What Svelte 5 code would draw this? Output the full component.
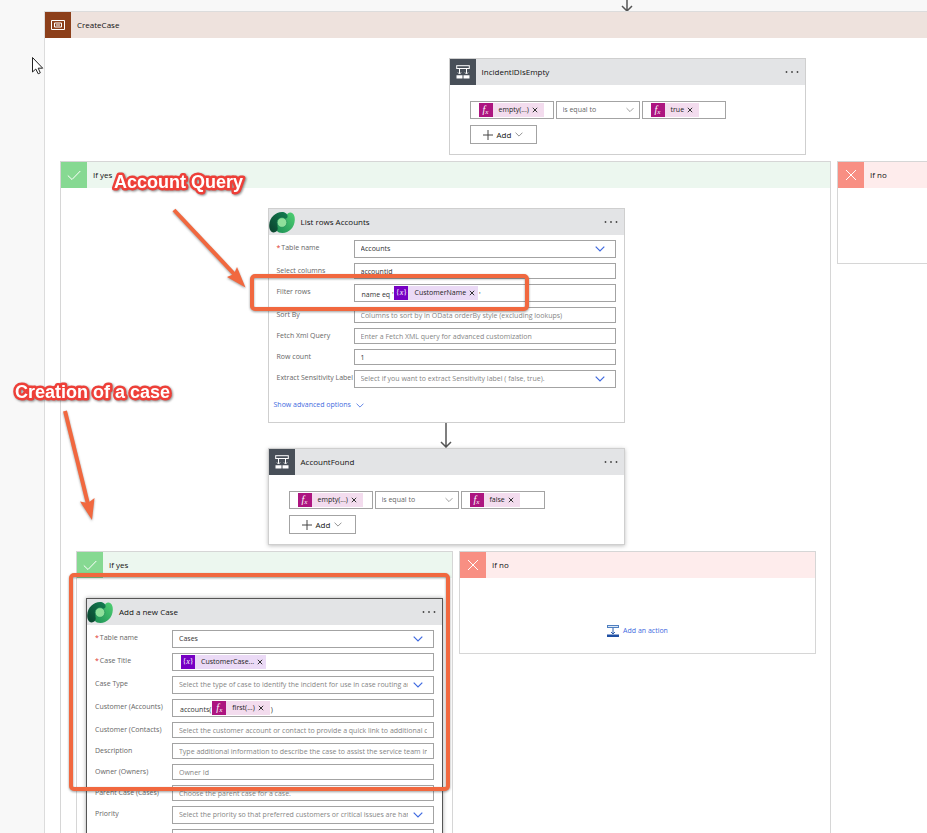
<script>
  const accountFields = [
    { id: 'acc-table', label: 'Table name', kind: 'select', value: 'Accounts', required: true },
    { id: 'acc-cols', label: 'Select columns', kind: 'text', value: 'accountid' },
    { id: 'acc-filter', label: 'Filter rows', kind: 'rich', before: "name eq '", token: { type: 'var', text: 'CustomerName' }, after: "'" },
    { id: 'acc-sort', label: 'Sort By', kind: 'text', hint: 'Columns to sort by in OData orderBy style (excluding lookups)' },
    { id: 'acc-fetch', label: 'Fetch Xml Query', kind: 'text', hint: 'Enter a Fetch XML query for advanced customization' },
    { id: 'acc-count', label: 'Row count', kind: 'text', value: '1' },
    { id: 'acc-label', label: 'Extract Sensitivity Label', kind: 'select', hint: 'Select if you want to extract Sensitivity label ( false, true).' }
  ];

  const caseFields = [
    { id: 'case-table', label: 'Table name', kind: 'select', value: 'Cases', required: true },
    { id: 'case-title', label: 'Case Title', kind: 'rich', token: { type: 'var', text: 'CustomerCase...' }, required: true },
    { id: 'case-type', label: 'Case Type', kind: 'select', hint: 'Select the type of case to identify the incident for use in case routing and analysis.' },
    { id: 'case-account', label: 'Customer (Accounts)', kind: 'rich', before: 'accounts(', token: { type: 'fx', text: 'first(...)' }, after: ')' },
    { id: 'case-contact', label: 'Customer (Contacts)', kind: 'text', hint: 'Select the customer account or contact to provide a quick link to additional customer details' },
    { id: 'case-desc', label: 'Description', kind: 'text', hint: 'Type additional information to describe the case to assist the service team in resolving it' },
    { id: 'case-owner', label: 'Owner (Owners)', kind: 'text', hint: 'Owner Id' },
    { id: 'case-parent', label: 'Parent Case (Cases)', kind: 'text', hint: 'Choose the parent case for a case.' },
    { id: 'case-priority', label: 'Priority', kind: 'select', hint: 'Select the priority so that preferred customers or critical issues are handled quickly.' },
    { id: 'case-next', label: '', kind: 'text' }
  ];
</script>

{#snippet chevron(cls)}
  <svg class={cls} viewBox="0 0 10 6" aria-hidden="true"><path d="M0.7 0.7 L5 5 L9.3 0.7" /></svg>
{/snippet}

{#snippet token(t)}
  <span class="token {t.type}">
    <span class="token-icon">
      {#if t.type === 'fx'}
        <i>f</i><i class="sub">x</i>
      {:else}
        {'{'}<i>x</i>{'}'}
      {/if}
    </span>
    <span class="token-text">{t.text}</span>
    <button class="token-close" aria-label="Remove {t.text}">
      <svg viewBox="0 0 6 6"><path d="M0.8 0.8 L5.2 5.2 M5.2 0.8 L0.8 5.2" /></svg>
    </button>
  </span>
{/snippet}

{#snippet field(f)}
  <div class="field">
    <label for={f.id} id="{f.id}-label">{#if f.required}<span class="req">*</span>{/if}{f.label}</label>
    {#if f.kind === 'select'}
      <span class="select-wrap">
        <select id={f.id} class="box" class:hint={!f.value}><option>{f.value ?? f.hint}</option></select>
        {@render chevron('chev blue')}
      </span>
    {:else if f.kind === 'rich'}
      <div id={f.id} class="box rich" role="textbox" tabindex="0" aria-labelledby="{f.id}-label">
        {#if f.before}<span class="piece">{f.before}</span>{/if}
        {@render token(f.token)}
        {#if f.after}<span class="piece">{f.after}</span>{/if}
      </div>
    {:else}
      <input id={f.id} class="box" type="text" value={f.value ?? ''} placeholder={f.hint ?? ''} />
    {/if}
  </div>
{/snippet}

{#snippet menu()}
  <button class="menu" aria-label="More commands">
    <svg viewBox="0 0 14 2"><circle cx="1.5" cy="1" r="0.9" /><circle cx="7" cy="1" r="0.9" /><circle cx="12.5" cy="1" r="0.9" /></svg>
  </button>
{/snippet}

{#snippet dataverse()}
  <svg class="dataverse" viewBox="0 0 26 21" aria-hidden="true">
    <defs>
      <linearGradient id="dv-dark" x1="0" y1="1" x2="1" y2="0"><stop offset="0" stop-color="#0a3f2c" /><stop offset="1" stop-color="#128052" /></linearGradient>
      <linearGradient id="dv-light" x1="0" y1="1" x2="1" y2="0"><stop offset="0" stop-color="#1c8f55" /><stop offset="1" stop-color="#4fd073" /></linearGradient>
    </defs>
    <path fill="url(#dv-light)" d="M21.500 0.600 C24.500 1 26 4 25.800 8 C25.500 15.500 20 21 13.500 21 C11 21 8.500 20.200 7.500 18.500 L8 13 L13 10.500 L17 4.500 C18 2 19.500 0.500 21.500 0.600 Z" />
    <path fill="url(#dv-dark)" d="M13 0 C16 0 18.500 1.800 18.600 4 C18.600 5.800 17.800 6.500 17 6.300 L13 10.500 L8.500 13 C8.300 14.500 8.600 15.200 8.800 16 C8.800 18.800 7 20.500 4.500 20.400 C1.500 20 0 17 0.200 13 C0.600 5.500 6.500 0 13 0 Z" />
    <circle cx="13" cy="10.500" r="4.800" fill="#8fe09b" stroke="#1a8a56" stroke-width="0.600" />
  </svg>
{/snippet}

{#snippet condition(title, left, right, raised)}
  <section class="card" class:raised>
    <header class="head">
      <span class="tile slate">
        <svg viewBox="0 0 14 14" aria-hidden="true">
          <rect x="0.700" y="0.700" width="12.600" height="2.800" />
          <path d="M3.500 3.500 V8.500 M10.500 3.500 V8.500 M2 7.500 L3.500 9 L5 7.500 M9 7.500 L10.500 9 L12 7.500" />
          <path class="solid" d="M0.500 10.200 H6.500 V13.500 H0.500 Z M7.500 10.200 H13.500 V13.500 H7.500 Z" />
        </svg>
      </span>
      <h2>{title}</h2>
      {@render menu()}
    </header>
    <div class="cond-body">
      <div class="cond-row">
        <div class="box rich" role="textbox" tabindex="0" aria-label="Left value">{@render token({ type: 'fx', text: left })}</div>
        <span class="select-wrap">
          <select class="box operator" aria-label="Operator"><option>is equal to</option></select>
          {@render chevron('chev grey')}
        </span>
        <div class="box rich" role="textbox" tabindex="0" aria-label="Right value">{@render token({ type: 'fx', text: right })}</div>
      </div>
      <button class="add">
        <svg class="plus" viewBox="0 0 10 10" aria-hidden="true"><path d="M5 0 V10 M0 5 H10" /></svg>
        Add
        {@render chevron('small')}
      </button>
    </div>
  </section>
{/snippet}

{#snippet yesHead()}
  <header class="head green-head">
    <span class="tile green"><svg viewBox="0 0 14 14" aria-hidden="true"><path d="M0.800 7.500 L5 11.500 L13.300 3" /></svg></span>
    <h2>If yes</h2>
  </header>
{/snippet}

{#snippet noHead()}
  <header class="head red-head">
    <span class="tile red"><svg viewBox="0 0 14 14" aria-hidden="true"><path d="M2 2 L12 12 M12 2 L2 12" /></svg></span>
    <h2>If no</h2>
  </header>
{/snippet}

<main class="canvas">
  <div class="flow">
    <svg class="connector short" viewBox="0 0 12 12" aria-hidden="true"><path d="M6 0 V11 M1 6 L6 11 L11 6" /></svg>

    <section class="scope">
      <header class="head scope-head">
        <span class="tile brown">
          <svg viewBox="0 0 14 14" aria-hidden="true"><path d="M0.500 2.500 H13.500 V11.500 H0.500 Z M3.500 5 H10.500 V9 H3.500 Z" /><path d="M5 7 H9" /></svg>
        </span>
        <h2>CreateCase</h2>
      </header>

      <div class="scope-body">
        {@render condition('IncidentIDIsEmpty', 'empty(...)', 'true', false)}

        <div class="branches">
          <section class="branch yes">
            {@render yesHead()}
            <div class="branch-body">
              <section class="card">
                <header class="head">
                  {@render dataverse()}
                  <h2>List rows Accounts</h2>
                  {@render menu()}
                </header>
                <div class="form">
                  {#each accountFields as f}{@render field(f)}{/each}
                </div>
                <a class="advanced" href="#advanced">Show advanced options {@render chevron('small')}</a>
              </section>

              <svg class="connector" viewBox="0 0 12 25" aria-hidden="true"><path d="M6 0 V24 M1 19 L6 24 L11 19" /></svg>

              {@render condition('AccountFound', 'empty(...)', 'false', true)}

              <div class="branches inner">
                <section class="branch yes">
                  {@render yesHead()}
                  <div class="branch-body">
                    <section class="card selected">
                      <header class="head">
                        {@render dataverse()}
                        <h2>Add a new Case</h2>
                        {@render menu()}
                      </header>
                      <div class="form">
                        {#each caseFields as f}{@render field(f)}{/each}
                      </div>
                    </section>
                  </div>
                </section>
                <section class="branch no">
                  {@render noHead()}
                  <div class="no-body">
                    <button class="add-action">
                      <svg viewBox="0 0 12 12" aria-hidden="true">
                        <rect x="0.500" y="0.500" width="11" height="2" fill="#dce9f7" stroke="#4f7fc0" />
                        <path d="M6 3 V9 M4 7 L6 9 L8 7" fill="none" stroke="#2d5fae" />
                        <rect y="9.500" width="12" height="2.500" fill="#1f4fa3" />
                      </svg>
                      Add an action
                    </button>
                  </div>
                </section>
              </div>
            </div>
          </section>

          <section class="branch no">
            {@render noHead()}
            <div class="no-body"></div>
          </section>
        </div>
      </div>
    </section>
  </div>

  <svg class="notes" width="927" height="833" viewBox="0 0 927 833">
    <g class="frames">
      <rect x="252" y="276" width="275" height="33" rx="3" />
      <rect x="71" y="575" width="377" height="214" rx="3" />
    </g>
    <g class="arrows">
      <path class="shaft" d="M174 210 L236 276" />
      <path d="M245.500 287.500 L237 267 L234 274 L227 277 Z" />
      <path class="shaft" d="M65 411 L88 504" />
      <path d="M92 520 L94.500 498 L88 503 L80 501.500 Z" />
    </g>
    <text x="114" y="188">Account Query</text>
    <text x="15" y="398">Creation of a case</text>
    <path class="cursor" d="M32.500 57.500 V72 L35.800 69 L38.200 73.800 L40.300 72.800 L38.200 68.200 H42.700 Z" />
  </svg>
</main>

<style>
  :global(body) {
    background: #f8f8f8;
  }

  .canvas {
    position: relative;
    height: 100vh;
    overflow: hidden;
    font-family: 'Open Sans', 'Noto Sans', sans-serif;
    font-size: 7px;
    line-height: 10px;
    color: #333;
  }

  .canvas * {
    box-sizing: border-box;
  }

  .flow {
    display: flex;
    flex-direction: column;
    width: max-content;
    margin-left: 45px;
  }

  button,
  select,
  input {
    margin: 0;
    font: inherit;
    color: inherit;
  }

  button {
    display: flex;
    align-items: center;
    padding: 0;
    border: 0;
    background: none;
  }

  svg {
    flex: none;
  }

  .connector {
    align-self: center;
    width: 12px;
    height: 25px;
    fill: none;
    stroke: #555;
    stroke-width: 1.5;
  }

  .connector.short {
    height: 12px;
  }

  .scope {
    box-shadow: 0 0 0 1px #dcdcdc;
    background: #fff;
  }

  .scope-body,
  .branch-body {
    display: flex;
    flex-direction: column;
    align-items: center;
    padding: 20px 15px;
  }

  .branch-body {
    padding: 20px 14px 20px 15px;
  }

  .inner .branch-body {
    padding: 20px 9px;
  }

  /* Headers shared by scopes, branches and cards */
  .head {
    display: flex;
    align-items: center;
    height: 26px;
    background: #e3e4e6;
  }

  .head h2 {
    flex: 1;
    margin: 0 0 0 6px;
    font-size: 8px;
    font-weight: 400;
    line-height: 12px;
    color: #111;
  }

  .scope-head {
    background: #eee2dd;
  }

  .green-head {
    background: #ecf7ef;
  }

  .red-head {
    background: #feecec;
  }

  .tile {
    display: grid;
    place-items: center;
    width: 26px;
    height: 100%;
  }

  .tile svg {
    width: 14px;
    height: 14px;
    fill: none;
    stroke: #fff;
    stroke-width: 1;
  }

  .tile .solid {
    fill: #fff;
    stroke: none;
  }

  .brown {
    background: #8c3f1a;
  }

  .slate {
    background: #484f58;
  }

  .green {
    background: #86d992;
  }

  .red {
    background: #f88f83;
  }

  .dataverse {
    width: 26px;
    height: 21px;
  }

  .menu {
    padding: 6px;
  }

  .menu svg {
    width: 14px;
    height: 2px;
    fill: #444;
  }

  .branches {
    display: flex;
    align-items: flex-start;
    gap: 6px;
    margin-top: 6px;
  }

  .branch {
    border: 1px solid #d6d6d6;
    background: #fff;
  }

  .branch.no {
    width: 357px;
  }

  .no-body {
    display: flex;
    justify-content: center;
    height: 75px;
    padding-top: 46px;
  }

  .add-action {
    gap: 4px;
    height: 14px;
    color: #3f6ae0;
  }

  .add-action svg {
    width: 12px;
    height: 12px;
  }

  .card {
    width: 357px;
    border: 1px solid #cfcfcf;
    background: #fff;
  }

  .card.raised {
    box-shadow: 0 1px 4px rgba(0, 0, 0, 0.25);
  }

  .card.selected {
    border-color: #555;
    box-shadow: 0 0 4px rgba(0, 0, 0, 0.35);
  }

  /* Parameter forms */
  .form {
    display: flex;
    flex-direction: column;
    gap: 5px;
    padding: 5px 8px 0;
  }

  .field {
    display: grid;
    grid-template-columns: 77px 1fr;
    align-items: start;
  }

  .field label {
    padding-top: 3px;
    color: #666;
    white-space: nowrap;
  }

  .req {
    color: #e0352b;
    margin-right: 1px;
  }

  .box {
    display: block;
    width: 100%;
    height: 16px;
    padding: 0 6px;
    border: 1px solid #a3a3a3;
    border-radius: 0;
    background: #fff;
    appearance: none;
    outline: none;
  }

  .box::placeholder,
  .box.hint {
    color: #858585;
    opacity: 1;
  }

  .select-wrap {
    position: relative;
    display: block;
  }

  select.box {
    height: 18px;
    padding-right: 25px;
    overflow: hidden;
    white-space: nowrap;
    text-overflow: clip;
  }

  .rich {
    display: flex;
    align-items: center;
    height: 18px;
    padding: 0 7px;
  }

  .piece {
    padding-top: 3px;
    white-space: nowrap;
  }

  .chev {
    position: absolute;
    top: 6px;
    right: 11px;
    width: 10px;
    height: 6px;
    fill: none;
    pointer-events: none;
  }

  .blue {
    stroke: #3f6ae0;
    stroke-width: 1.2;
  }

  .grey {
    right: 6px;
    width: 8px;
    stroke: #888;
  }

  .small {
    width: 8px;
    height: 5px;
    fill: none;
    stroke: #777;
  }

  .token {
    display: flex;
    align-items: center;
    height: 14px;
    margin: 0 1px;
    padding-right: 6px;
    background: #f3dcee;
    color: #222;
  }

  .token.var {
    padding-right: 3px;
    background: #ebdaf6;
  }

  .token-icon {
    display: flex;
    align-items: center;
    justify-content: center;
    width: 14px;
    height: 14px;
    margin-right: 6px;
    background: #ad1580;
    color: #fff;
    font-family: 'Liberation Serif', serif;
    font-size: 10px;
  }

  .token-icon .sub {
    padding-top: 3px;
    font-size: 7px;
  }

  .var .token-icon {
    background: #7700c4;
    font-size: 8px;
  }

  .token-close {
    margin-left: 3px;
  }

  .token-close svg {
    width: 6px;
    height: 6px;
    stroke: #333;
    stroke-width: 1;
  }

  .advanced {
    display: flex;
    align-items: center;
    gap: 5px;
    height: 16px;
    margin: 9px 5px;
    color: #3f6ae0;
    text-decoration: none;
  }

  .advanced :global(.small) {
    stroke: #3f6ae0;
  }

  /* Condition cards */
  .cond-body {
    padding: 16px 20px 10px;
  }

  .cond-row {
    display: grid;
    grid-template-columns: repeat(3, 84px);
    gap: 2px;
  }

  .operator {
    color: #666;
  }

  .add {
    justify-content: center;
    gap: 4px;
    width: 67px;
    height: 19px;
    margin-top: 6px;
    border: 1px solid #a3a3a3;
    font-size: 8px;
    color: #111;
  }

  .plus {
    width: 10px;
    height: 10px;
    stroke: #444;
  }

  /* Hand-drawn annotations above the flow */
  .notes {
    position: absolute;
    top: 0;
    left: 0;
    pointer-events: none;
  }

  .frames rect {
    fill: none;
    stroke: #f1683f;
    stroke-width: 4;
  }

  .frames,
  .arrows {
    filter: drop-shadow(0 1px 1px rgba(60, 60, 60, 0.5));
  }

  .arrows path {
    fill: #f1683f;
  }

  .arrows .shaft {
    stroke: #f1683f;
    stroke-width: 4;
  }

  .notes text {
    font-family: 'Liberation Sans', Arial, sans-serif;
    font-size: 18px;
    font-weight: 700;
    fill: #fff;
    stroke: #ee3f38;
    stroke-width: 5;
    stroke-linejoin: round;
    paint-order: stroke;
    filter: drop-shadow(1px 1px 1px rgba(60, 60, 60, 0.6));
  }

  .cursor {
    fill: #fff;
    stroke: #222;
  }
</style>
